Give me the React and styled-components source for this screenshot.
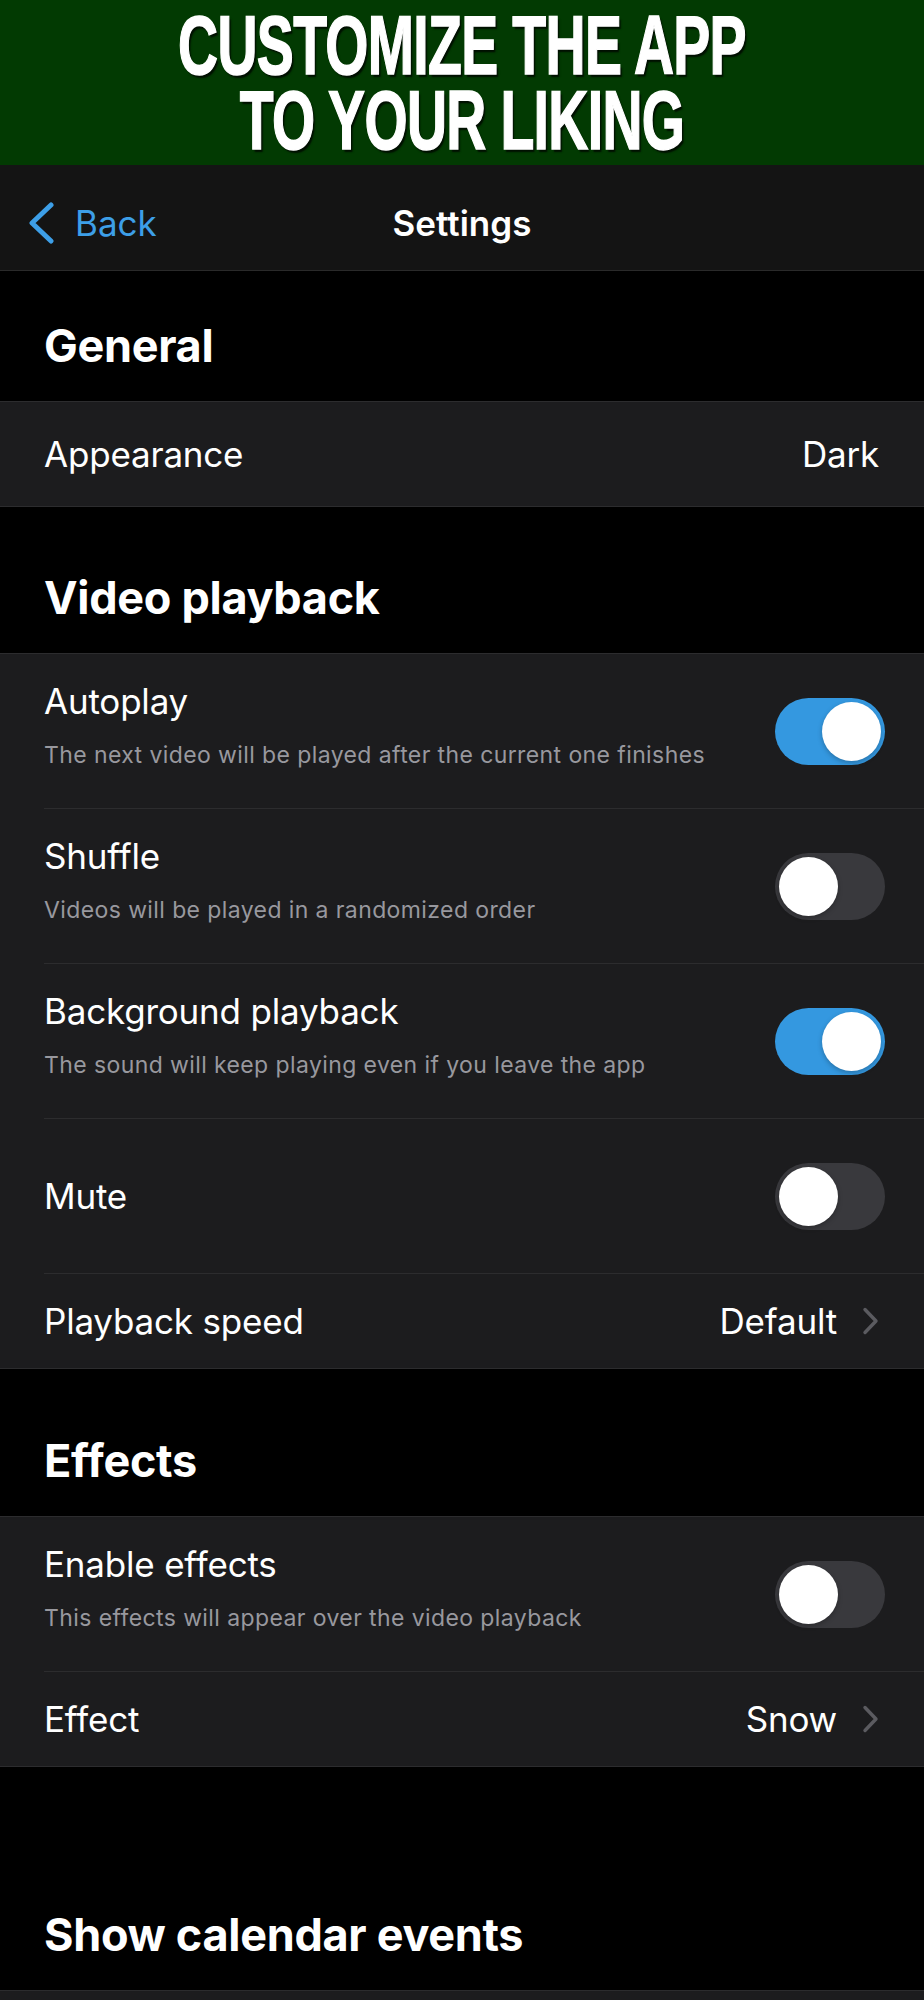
import React from "react";
import styled, { createGlobalStyle } from "styled-components";

const Global = createGlobalStyle`
  html, body { margin: 0; padding: 0; background: #000; }
  body { font-family: Inter, "Noto Sans", "DejaVu Sans", sans-serif; -webkit-font-smoothing: antialiased; }
  * { box-sizing: border-box; }
`;

const Page = styled.div`
  width: 924px;
  background: #000;
  color: #fff;
  min-height: 2000px;
`;

const Banner = styled.header`
  height: 165px;
  background: #023a02;
  display: flex;
  flex-direction: column;
  justify-content: center;
  align-items: center;
`;

const BannerLine = styled.div`
  width: 100%;
  font-family: "Liberation Sans", Arial, sans-serif;
  font-weight: 700;
  font-size: 84px;
  line-height: 75px;
  color: #fff;
  text-align: center;
  white-space: nowrap;
  letter-spacing: -1px;
  transform: scaleX(0.66);
  -webkit-text-stroke: 1.5px #fff;
  text-shadow: 3px 3px 2px rgba(0, 0, 0, 0.75);
`;

const NavBar = styled.nav`
  height: 106px;
  background: #141414;
  border-bottom: 1px solid #2a2a2a;
  display: grid;
  grid-template-columns: 1fr auto 1fr;
  align-items: center;
  padding: 10px 28px 0;
`;

const BackButton = styled.button`
  display: flex;
  align-items: center;
  gap: 21px;
  background: none;
  border: 0;
  padding: 0;
  color: #3d9fe8;
  font-family: inherit;
  font-size: 35px;
  font-weight: 400;
  justify-self: start;
  cursor: pointer;
`;

const NavTitle = styled.div`
  font-size: 35px;
  font-weight: 600;
  color: #fff;
`;

const SectionHeader = styled.h2`
  margin: 0;
  padding: ${(p) => p.$top}px 44px 28px;
  font-size: 45px;
  line-height: 54px;
  font-weight: 700;
  letter-spacing: -0.3px;
  color: #fff;
`;

const Group = styled.section`
  background: #1c1c1e;
  border-top: 1px solid #2c2c2e;
  border-bottom: 1px solid #2c2c2e;
  min-height: ${(p) => p.$minH || 0}px;
`;

const Row = styled.div`
  padding-left: 44px;
  &:last-child > div {
    border-bottom: 0;
  }
`;

const RowInner = styled.div`
  box-sizing: content-box;
  height: ${(p) => p.$h}px;
  display: flex;
  align-items: center;
  justify-content: space-between;
  padding-right: 39px;
  border-bottom: 1px solid #2c2c2e;
`;

const TextCol = styled.div`
  display: flex;
  flex-direction: column;
  gap: 19px;
  margin-bottom: ${(p) => (p.$sub ? 12 : 0)}px;
`;

const Title = styled.div`
  font-size: 35px;
  line-height: 42px;
  color: #fff;
  letter-spacing: -0.2px;
`;

const Subtitle = styled.div`
  font-size: 23px;
  line-height: 29px;
  color: #98989e;
  letter-spacing: 0.4px;
`;

const ValueWrap = styled.div`
  display: flex;
  align-items: center;
  gap: 25px;
  padding-right: 6px;
`;

const Value = styled.span`
  font-size: 35px;
  line-height: 42px;
  color: #fff;
  letter-spacing: -0.2px;
`;

const Track = styled.div`
  width: 110px;
  height: 67px;
  border-radius: 34px;
  background: ${(p) => (p.$on ? "#3498e0" : "#39393d")};
  display: flex;
  align-items: center;
  justify-content: ${(p) => (p.$on ? "flex-end" : "flex-start")};
  padding: 0 4px;
  flex-shrink: 0;
`;

const Knob = styled.div`
  width: 59px;
  height: 59px;
  border-radius: 50%;
  background: #fff;
  box-shadow: 0 2px 5px rgba(0, 0, 0, 0.25);
`;

const Chevron = () => (
  <svg width="17" height="28" viewBox="0 0 17 28" fill="none">
    <path d="M3 2.5 L14 14 L3 25.5" stroke="#5b5b60" strokeWidth="3.4" strokeLinecap="round" strokeLinejoin="round" />
  </svg>
);

const BackChevron = () => (
  <svg width="26" height="42" viewBox="0 0 26 42" fill="none">
    <path d="M23 3 L4 21 L23 39" stroke="#3d9fe8" strokeWidth="5" strokeLinecap="round" strokeLinejoin="round" />
  </svg>
);

const Toggle = ({ on }) => (
  <Track $on={on}>
    <Knob />
  </Track>
);

const ToggleRow = ({ title, sub, on }) => (
  <Row>
    <RowInner $h={154}>
      <TextCol $sub={!!sub}>
        <Title>{title}</Title>
        {sub && <Subtitle>{sub}</Subtitle>}
      </TextCol>
      <Toggle on={on} />
    </RowInner>
  </Row>
);

const ValueRow = ({ title, value, chevron, h = 94 }) => (
  <Row>
    <RowInner $h={h}>
      <Title>{title}</Title>
      <ValueWrap>
        <Value>{value}</Value>
        {chevron && <Chevron />}
      </ValueWrap>
    </RowInner>
  </Row>
);

export default function App() {
  return (
    <Page>
      <Global />
      <Banner>
        <BannerLine>CUSTOMIZE THE APP</BannerLine>
        <BannerLine>TO YOUR LIKING</BannerLine>
      </Banner>
      <NavBar>
        <BackButton>
          <BackChevron />
          <span>Back</span>
        </BackButton>
        <NavTitle>Settings</NavTitle>
        <div />
      </NavBar>

      <SectionHeader $top={48}>General</SectionHeader>
      <Group>
        <ValueRow title="Appearance" value="Dark" h={104} />
      </Group>

      <SectionHeader $top={64}>Video playback</SectionHeader>
      <Group>
        <ToggleRow title="Autoplay" sub="The next video will be played after the current one finishes" on />
        <ToggleRow title="Shuffle" sub="Videos will be played in a randomized order" on={false} />
        <ToggleRow title="Background playback" sub="The sound will keep playing even if you leave the app" on />
        <ToggleRow title="Mute" on={false} />
        <ValueRow title="Playback speed" value="Default" chevron />
      </Group>

      <SectionHeader $top={65}>Effects</SectionHeader>
      <Group>
        <ToggleRow title="Enable effects" sub="This effects will appear over the video playback" on={false} />
        <ValueRow title="Effect" value="Snow" chevron />
      </Group>

      <SectionHeader $top={141}>Show calendar events</SectionHeader>
      <Group $minH={40} />
    </Page>
  );
}
